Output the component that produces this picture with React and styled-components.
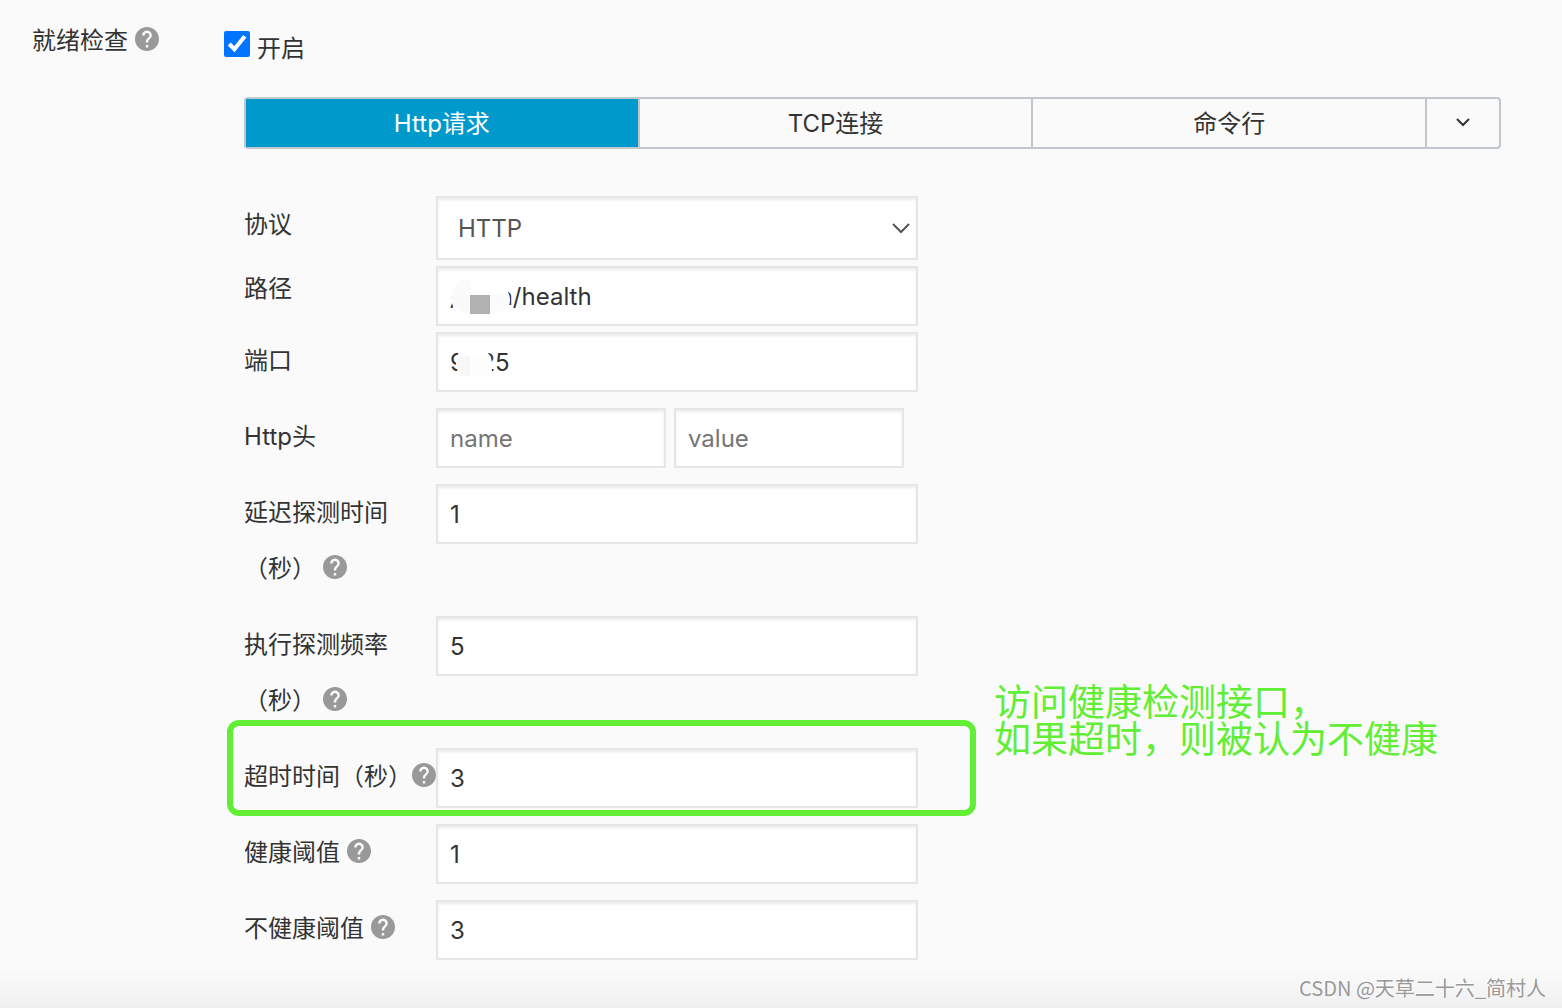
import React, { useState } from "react";
import styled, { createGlobalStyle } from "styled-components";

const GlobalStyle = createGlobalStyle`
  * {
    box-sizing: border-box;
  }
  body {
    margin: 0;
    background: #fafafa;
    color: #333;
    font-family: Inter, "Noto Sans CJK SC", sans-serif;
    font-size: 24px;
  }
  button, input, select {
    font: inherit;
    color: inherit;
  }
`;

const Page = styled.main`
  min-height: 100vh;
  display: flex;
  flex-direction: column;
`;

const Section = styled.section`
  display: flex;
  flex: 1;
  padding: 12px 61px 0 32px;
`;

const SectionTitle = styled.div`
  width: 192px;
  flex-shrink: 0;
  padding-top: 1px;
  line-height: 56px;
`;

const SectionBody = styled.div`
  flex: 1;
  min-width: 0;
`;

const EnableLabel = styled.label`
  display: flex;
  align-items: center;
  gap: 7px;
  height: 72px;
  padding-bottom: 4px;
`;

const Checkbox = styled.input`
  width: 26px;
  height: 26px;
  margin: 0 0 4px;
  accent-color: #0075ff;
`;

const Panel = styled.div`
  padding: 13px 0 0 20px;
`;

const Tabs = styled.div`
  display: flex;
  height: 52px;
  margin-bottom: 47px;
  border: 2px solid #c1c7cd;
  border-radius: 4px;
`;

const Tab = styled.button`
  flex: ${({ $narrow }) => ($narrow ? "0 0 74px" : "1")};
  display: flex;
  align-items: center;
  justify-content: center;
  padding: 0 0 3px;
  border: 0;
  border-left: ${({ $first }) => ($first ? "0" : "2px solid #c1c7cd")};
  background: ${({ $active }) => ($active ? "#0099cc" : "transparent")};
  color: ${({ $active }) => ($active ? "#fff" : "#333")};
  cursor: pointer;
`;

const Row = styled.div`
  position: relative;
  display: flex;
  min-height: 60px;
  margin-bottom: ${({ $gap = 16 }) => $gap}px;
`;

const Label = styled.label`
  width: 192px;
  flex-shrink: 0;
  padding: 1px 0 3px;
  line-height: 56px;
  white-space: ${({ $tight }) => ($tight ? "nowrap" : "normal")};
`;

const HelpIcon = styled.svg`
  width: 24px;
  height: 24px;
  margin-left: ${({ $tight }) => ($tight ? 0 : 7)}px;
  vertical-align: -2px;
  fill: #999;
`;

const Control = styled.div`
  position: relative;
  display: flex;
  flex: 0 1 482px;
  gap: 8px;
  padding-top: ${({ $top = 0 }) => $top}px;
`;

const Input = styled.input`
  flex: ${({ $half }) => ($half ? "0 1 230px" : "1")};
  min-width: 0;
  height: 60px;
  padding: 1px 12px 0;
  border: 2px solid #e6e6e6;
  border-radius: 0;
  background: #fff;
  box-shadow: inset 0 2px 3px rgba(0, 0, 0, 0.08);
  outline: none;

  &::placeholder {
    color: #757575;
    opacity: 1;
  }
`;

const Select = styled.select`
  flex: 1;
  height: 64px;
  padding: 0 40px 0 20px;
  border: 2px solid #e6e6e6;
  border-radius: 0;
  background: #fff;
  box-shadow: inset 0 2px 3px rgba(0, 0, 0, 0.08);
  color: #555;
  appearance: none;
  outline: none;
`;

const SelectArrow = styled.svg`
  position: absolute;
  top: 25px;
  right: 7px;
  width: 20px;
  height: 14px;
  pointer-events: none;
`;

const Mask = styled.svg`
  position: absolute;
  left: 14px;
  bottom: 8px;
  width: 64px;
  height: 40px;
  pointer-events: none;
`;

const Highlight = styled.div`
  position: absolute;
  top: -28px;
  left: -17px;
  width: 749px;
  height: 96px;
  border: 6px solid #61ee35;
  border-radius: 12px;
  pointer-events: none;
`;

const Note = styled.p`
  position: absolute;
  top: -64px;
  left: 750px;
  margin: 0;
  color: #61ee35;
  font-size: 37px;
  line-height: 37px;
  white-space: nowrap;
`;

const Footer = styled.footer`
  height: 48px;
  padding: 14px 16px 0;
  background: linear-gradient(#fafafa 20%, #f0f0f0);
  color: #999;
  font-family: "Noto Sans CJK SC", sans-serif;
  font-size: 20px;
  line-height: 28px;
  text-align: right;
  text-shadow: -1px -1px 0 #fff;
`;

const Help = ({ tight }) => (
  <HelpIcon $tight={tight} viewBox="2 2 20 20" aria-hidden="true">
    <path d="M12 2C6.48 2 2 6.48 2 12s4.48 10 10 10 10-4.48 10-10S17.52 2 12 2zm1 17h-2v-2h2v2zm2.07-7.75-.9.92C13.45 12.9 13 13.5 13 15h-2v-.5c0-1.1.45-2.1 1.17-2.83l1.24-1.26c.37-.36.59-.86.59-1.41 0-1.1-.9-2-2-2s-2 .9-2 2H8c0-2.21 1.79-4 4-4s4 1.79 4 4c0 .88-.36 1.68-.93 2.25z" />
  </HelpIcon>
);

const PathMask = () => (
  <Mask viewBox="0 0 64 40" aria-hidden="true">
    <path d="M20 0C8 0 0 8 0 18s8 18 20 18h26c10 0 14-7 14-14s-4-12-10-14L20 0z" fill="#fff" />
    <path d="M20 1C10 1 2 8 2 18h18z" fill="#fbfbfb" />
    <path d="M0 18h20v18C10 35 2 28 0 18z" fill="#f9f9f9" />
    <path d="M40 17h19c1 11-6 19-19 19z" fill="#fbfbfb" />
    <path d="M20 17h20v19H20z" fill="#b1b1b1" />
  </Mask>
);

const PortMask = () => (
  <Mask viewBox="0 0 64 40" aria-hidden="true">
    <path d="M9 8h28c6 6 6 14 4 23-8 7-27 6-32-1-4-7-4-16 0-22z" fill="#fff" />
    <path d="M9 12h11v20h-9C6 26 6 18 9 12z" fill="#f7f7f7" />
    <path d="M20 12h17c5 6 5 14 2 20H20z" fill="#fdfdfd" />
  </Mask>
);

const tabs = ["Http请求", "TCP连接", "命令行"];

const ReadinessCheck = () => {
  const [enabled, setEnabled] = useState(true);
  const [activeTab, setActiveTab] = useState(0);

  return (
    <Section>
      <SectionTitle>
        就绪检查
        <Help />
      </SectionTitle>
      <SectionBody>
        <EnableLabel>
          <Checkbox
            type="checkbox"
            checked={enabled}
            onChange={() => setEnabled(!enabled)}
          />
          开启
        </EnableLabel>
        <Panel>
          <Tabs>
            {tabs.map((item, index) => (
              <Tab
                key={item}
                type="button"
                $first={index === 0}
                $active={index === activeTab}
                onClick={() => setActiveTab(index)}
              >
                {item}
              </Tab>
            ))}
            <Tab type="button" $narrow aria-label="更多">
              <svg width="14" height="10" viewBox="0 0 14 10" fill="none">
                <path d="M1 2l6 6 6-6" stroke="#333" strokeWidth="2" />
              </svg>
            </Tab>
          </Tabs>

          <Row $gap={0}>
            <Label htmlFor="protocol">协议</Label>
            <Control>
              <Select id="protocol" defaultValue="HTTP">
                <option>HTTP</option>
                <option>HTTPS</option>
              </Select>
              <SelectArrow viewBox="0 0 20 14" fill="none">
                <path d="M2 3l8 8 8-8" stroke="#555" strokeWidth="2" />
              </SelectArrow>
            </Control>
          </Row>
          <Row $gap={6}>
            <Label htmlFor="path">路径</Label>
            <Control $top={6}>
              <Input id="path" defaultValue={"/\u2002\u2002\u2004\u2004n/health"} />
              <PathMask />
            </Control>
          </Row>
          <Row>
            <Label htmlFor="port">端口</Label>
            <Control>
              <Input id="port" defaultValue={"9\u200725"} />
              <PortMask />
            </Control>
          </Row>
          <Row>
            <Label htmlFor="header-name">Http头</Label>
            <Control>
              <Input id="header-name" $half placeholder="name" />
              <Input $half placeholder="value" aria-label="value" />
            </Control>
          </Row>
          <Row>
            <Label htmlFor="delay">
              延迟探测时间（秒）
              <Help />
            </Label>
            <Control>
              <Input id="delay" defaultValue="1" />
            </Control>
          </Row>
          <Row>
            <Label htmlFor="period">
              执行探测频率（秒）
              <Help />
            </Label>
            <Control>
              <Input id="period" defaultValue="5" />
            </Control>
          </Row>
          <Row>
            <Label htmlFor="timeout" $tight>
              超时时间（秒）
              <Help tight />
            </Label>
            <Control>
              <Input id="timeout" defaultValue="3" />
            </Control>
            <Highlight />
            <Note>
              访问健康检测接口，
              <br />
              如果超时，则被认为不健康
            </Note>
          </Row>
          <Row>
            <Label htmlFor="healthy">
              健康阈值
              <Help />
            </Label>
            <Control>
              <Input id="healthy" defaultValue="1" />
            </Control>
          </Row>
          <Row $gap={0}>
            <Label htmlFor="unhealthy">
              不健康阈值
              <Help />
            </Label>
            <Control>
              <Input id="unhealthy" defaultValue="3" />
            </Control>
          </Row>
        </Panel>
      </SectionBody>
    </Section>
  );
};

const App = () => (
  <Page>
    <GlobalStyle />
    <ReadinessCheck />
    <Footer>CSDN @天草二十六_简村人</Footer>
  </Page>
);

export default App;
